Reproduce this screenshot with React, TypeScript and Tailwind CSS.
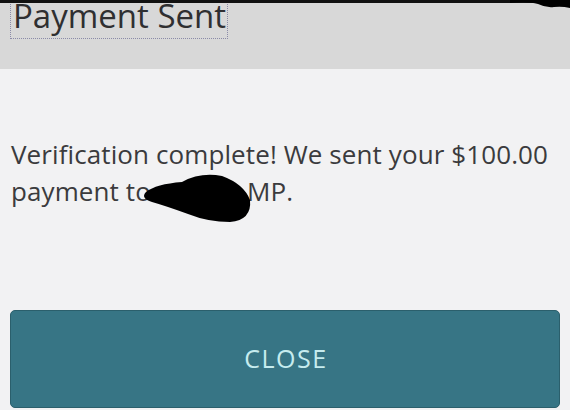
export default function App() {
  return (
    <div
      className="relative w-[570px] h-[410px] overflow-hidden bg-[#f2f2f3] text-[#3b3b3d]"
      style={{ fontFamily: '"Open Sans", "Noto Sans", sans-serif' }}
    >
      {/* header */}
      <div className="h-[69px] bg-[#d8d8d8] pl-[10px]">
        <div className="inline-block -mt-[8px] border border-dotted border-[#8b8ba8] pl-[2px] pr-[1px] text-[33px] leading-[45px] text-[#2f2f31]">
          Payment Sent
        </div>
      </div>

      {/* top edge of the phone frame */}
      <div className="absolute left-0 top-0 h-[3px] w-full bg-[#111]" />
      <svg className="absolute right-0 top-0" width="60" height="10" viewBox="0 0 60 10">
        <path d="M0 0 H60 V8 Q52 6 44 7 Q36 8 28 4 Q18 1 0 3 Z" fill="#000" />
      </svg>

      {/* message */}
      <div className="relative mt-[67px] px-[11px] text-[26px] leading-[37px] tracking-[0.1px]">
        <p>Verification complete! We sent your $100.00</p>
        <p>
          payment to<span className="inline-block w-[96px]" />MP.
        </p>
        <svg
          className="absolute left-[138px] top-[34px]"
          width="120"
          height="56"
          viewBox="0 0 120 56"
        >
          <path
            d="M8 22 Q18 14 44 12 Q62 2 84 6 Q106 14 112 30 Q114 50 92 52 Q70 52 50 44 Q28 36 14 32 Q2 28 8 22 Z"
            fill="#000"
          />
        </svg>
      </div>

      {/* button */}
      <div className="absolute inset-x-0 bottom-0 px-[10px] pb-[2px]">
        <button className="flex h-[98px] w-full items-center justify-center rounded-[5px] border border-[#2b5f6c] bg-[#377585] pl-[2px] text-[25px] tracking-[1.5px] text-[#c6ecef]">
          CLOSE
        </button>
      </div>
    </div>
  );
}
